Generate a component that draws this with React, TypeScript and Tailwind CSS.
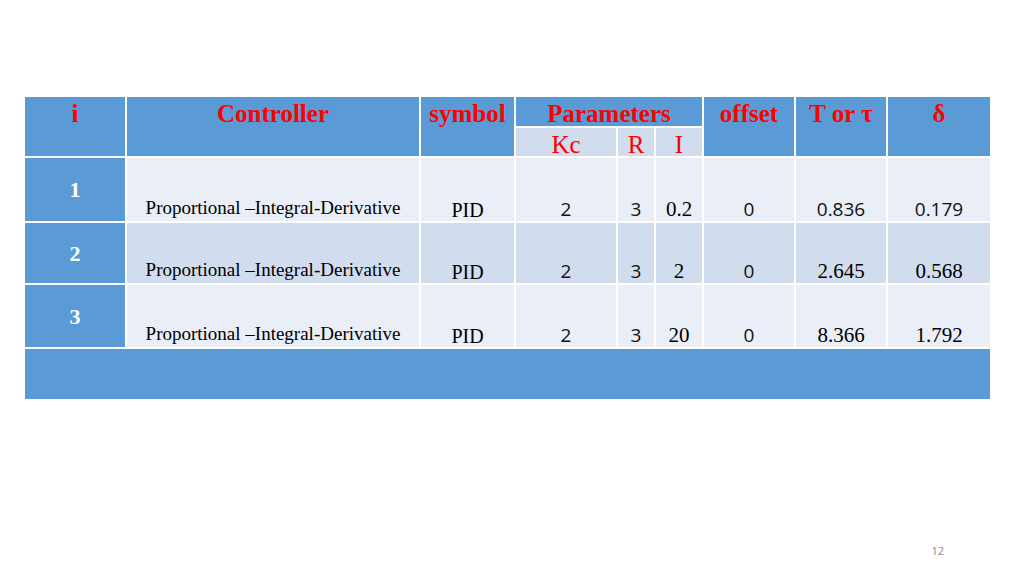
import React from "react";

const serif = { fontFamily: '"Liberation Serif", "Times New Roman", serif' };
const sans = { fontFamily: '"Open Sans", "Liberation Sans", sans-serif' };

type Cell = { v: string; f: "serif" | "sans" };

const rows: { n: string; bg: string; kc: Cell; r: Cell; i: Cell; off: Cell; t: Cell; d: Cell }[] = [
  {
    n: "1",
    bg: "bg-[#e9eef7]",
    kc: { v: "2", f: "sans" },
    r: { v: "3", f: "sans" },
    i: { v: "0.2", f: "serif" },
    off: { v: "0", f: "sans" },
    t: { v: "0.836", f: "sans" },
    d: { v: "0.179", f: "sans" },
  },
  {
    n: "2",
    bg: "bg-[#d1ddee]",
    kc: { v: "2", f: "sans" },
    r: { v: "3", f: "sans" },
    i: { v: "2", f: "serif" },
    off: { v: "0", f: "sans" },
    t: { v: "2.645", f: "serif" },
    d: { v: "0.568", f: "serif" },
  },
  {
    n: "3",
    bg: "bg-[#e9eef7]",
    kc: { v: "2", f: "sans" },
    r: { v: "3", f: "sans" },
    i: { v: "20", f: "serif" },
    off: { v: "0", f: "sans" },
    t: { v: "8.366", f: "serif" },
    d: { v: "1.792", f: "serif" },
  },
];

function Num({ c, bg }: { c: Cell; bg: string }) {
  if (c.f === "sans") {
    return (
      <div className={`${bg} flex items-end justify-center pb-[2px]`}>
        <span className="text-[19px] leading-none text-[#111]" style={sans}>
          {c.v}
        </span>
      </div>
    );
  }
  return (
    <div className={`${bg} flex items-end justify-center pb-[1px]`}>
      <span className="text-[21px] leading-none text-black" style={serif}>
        {c.v}
      </span>
    </div>
  );
}

function Head({ children, cls }: { children: React.ReactNode; cls: string }) {
  return (
    <div className={`bg-[#5b9bd5] flex justify-center items-start pt-[7px] ${cls}`}>
      <span className="text-[25px] leading-[20px] font-bold text-[#ff0000] whitespace-nowrap" style={serif}>
        {children}
      </span>
    </div>
  );
}

function Sub({ children }: { children: React.ReactNode }) {
  return (
    <div className="bg-[#d1ddee] flex justify-center items-start pt-[7px]">
      <span className="text-[25px] leading-[20px] text-[#ff0000]" style={serif}>
        {children}
      </span>
    </div>
  );
}

export default function App() {
  return (
    <div className="w-[1024px] h-[576px] bg-white flex flex-col overflow-hidden">
      <div className="pt-[97px] pl-[25px]">
        <div className="grid w-[965px] gap-[2px] bg-white grid-cols-[100px_292px_93px_100px_36px_46px_90px_90px_102px] grid-rows-[29px_28px_63px_60px_62px_50px]">
          <Head cls="row-span-2">i</Head>
          <Head cls="row-span-2">Controller</Head>
          <Head cls="row-span-2">symbol</Head>
          <Head cls="col-span-3">Parameters</Head>
          <Head cls="row-span-2">offset</Head>
          <Head cls="row-span-2">T or τ</Head>
          <Head cls="row-span-2">δ</Head>
          <Sub>Kc</Sub>
          <Sub>R</Sub>
          <Sub>I</Sub>

          {rows.map((r) => (
            <React.Fragment key={r.n}>
              <div className="bg-[#5b9bd5] flex items-center justify-center pt-[1px]">
                <span className="text-[22px] leading-none font-bold text-white" style={serif}>
                  {r.n}
                </span>
              </div>
              <div className={`${r.bg} flex items-end justify-center pb-[4px]`}>
                <span className="text-[19px] leading-none text-black whitespace-nowrap" style={serif}>
                  Proportional –Integral-Derivative
                </span>
              </div>
              <div className={`${r.bg} flex items-end justify-center pb-[1px]`}>
                <span className="text-[20px] leading-none text-black" style={serif}>
                  PID
                </span>
              </div>
              <Num c={r.kc} bg={r.bg} />
              <Num c={r.r} bg={r.bg} />
              <Num c={r.i} bg={r.bg} />
              <Num c={r.off} bg={r.bg} />
              <Num c={r.t} bg={r.bg} />
              <Num c={r.d} bg={r.bg} />
            </React.Fragment>
          ))}

          <div className="col-span-9 bg-[#5b9bd5]" />
        </div>
      </div>
      <div className="mt-auto flex justify-end pr-[80px] pb-[20px]">
        <span className="text-[11px] leading-none text-[#8a8a8a]" style={sans}>
          12
        </span>
      </div>
    </div>
  );
}
